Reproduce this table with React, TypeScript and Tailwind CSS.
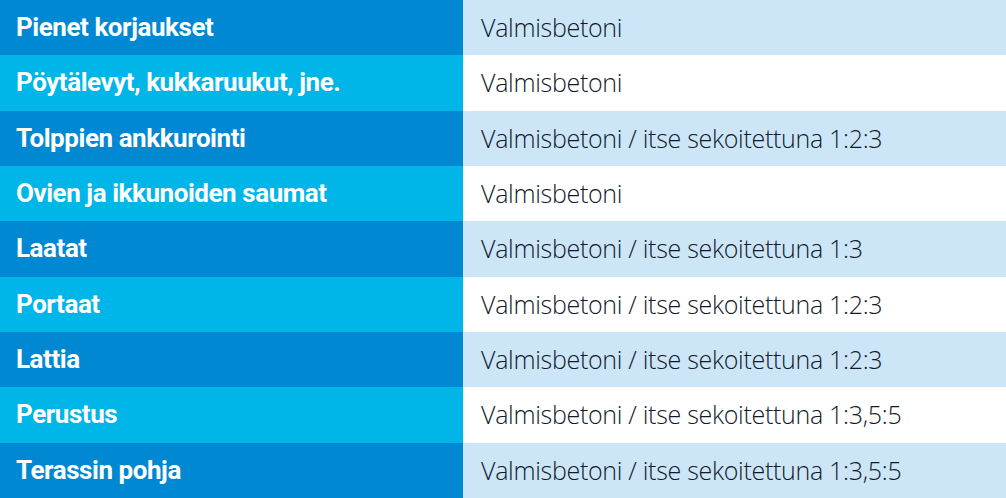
const rows = [
  ["Pienet korjaukset", "Valmisbetoni"],
  ["Pöytälevyt, kukkaruukut, jne.", "Valmisbetoni"],
  ["Tolppien ankkurointi", "Valmisbetoni / itse sekoitettuna 1:2:3"],
  ["Ovien ja ikkunoiden saumat", "Valmisbetoni"],
  ["Laatat", "Valmisbetoni / itse sekoitettuna 1:3"],
  ["Portaat", "Valmisbetoni / itse sekoitettuna 1:2:3"],
  ["Lattia", "Valmisbetoni / itse sekoitettuna 1:2:3"],
  ["Perustus", "Valmisbetoni / itse sekoitettuna 1:3,5:5"],
  ["Terassin pohja", "Valmisbetoni / itse sekoitettuna 1:3,5:5"],
]

export default function App() {
  return (
    <div className="flex h-[498px] w-[1006px] flex-col bg-white">
      {rows.map(([use, mix], i) => {
        const even = i % 2 === 0
        return (
          <div key={i} className="flex flex-1 items-center">
            <div
              className={
                "flex h-full w-[463px] items-center pl-4 font-['Roboto',sans-serif] text-[26px] font-bold tracking-[-0.45px] text-white " +
                (even ? "bg-[#0188d2]" : "bg-[#00b5e8]")
              }
            >
              {use}
            </div>
            <div
              className={
                "flex h-full flex-1 items-center pl-[18px] font-['Open_Sans',sans-serif] text-[25px] font-light tracking-[-0.3px] text-[#101a2a] " +
                (even ? "bg-[#cce6f7]" : "bg-white")
              }
            >
              {mix}
            </div>
          </div>
        )
      })}
    </div>
  )
}
